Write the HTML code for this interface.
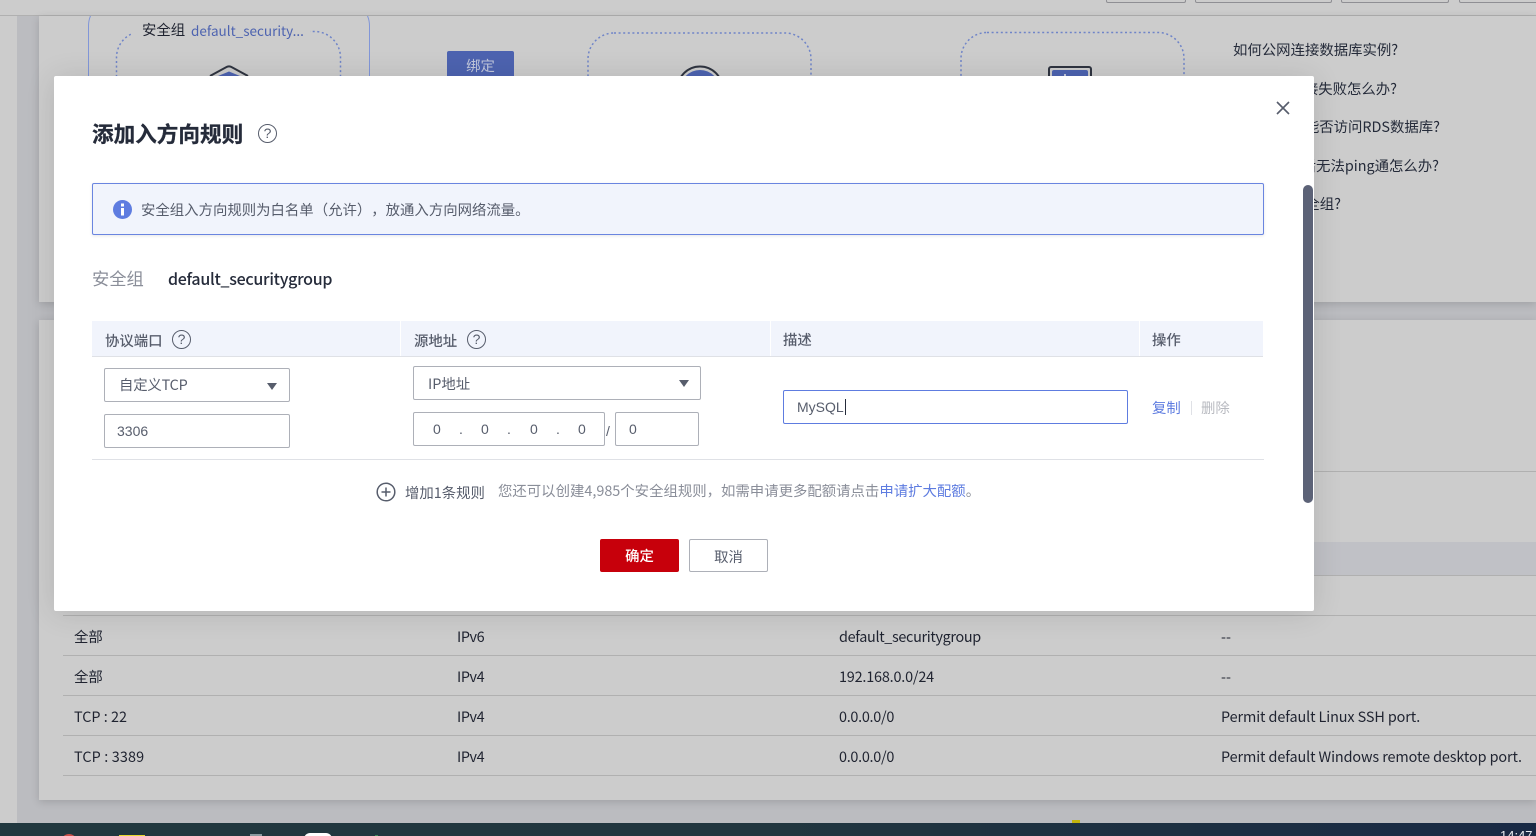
<!DOCTYPE html>
<html lang="zh">
<head>
<meta charset="utf-8">
<style>
html,body{margin:0;padding:0;width:1536px;height:836px;overflow:hidden;background:#ccc}
body{position:relative;font-family:"Liberation Sans","Noto Sans CJK SC",sans-serif;font-size:14.4px;color:#252b3a}
.a{position:absolute;white-space:nowrap}
.n{font-family:"Noto Sans CJK SC",sans-serif;text-spacing-trim:space-all}
.l{position:absolute;height:1px;background:#b0b0b0}
.box{position:absolute;box-sizing:border-box;background:#fff;border:1px solid #adb0b8;border-radius:2px}
.q{position:absolute;box-sizing:border-box;border:1.6px solid #575d6c;border-radius:50%;width:19px;height:19px;text-align:center;font-size:14px;line-height:16px;color:#575d6c}
.tri{position:absolute;width:0;height:0;border-left:5px solid transparent;border-right:5px solid transparent;border-top:7px solid #575d6c}
.th{position:absolute;top:321px;height:35px;background:#f1f4fc}
.h{top:331px;line-height:20px;font-weight:500;color:#575d6c}
.c{line-height:20px;color:#1f2330}
.r{line-height:20px;color:#252b3a}
</style>
</head>
<body>
<!-- background -->
<div class="a" style="left:17px;top:15px;width:1519px;height:808px;background:#bbbcc0"></div>
<div class="a" style="left:0;top:0;width:1536px;height:15px;background:#ccc"></div>
<div class="l" style="left:0;top:15px;width:1536px"></div>
<div class="a" style="left:1106px;top:0;width:78px;height:2px;border:1px solid #8f8f94;border-top:0;border-radius:0 0 2px 2px"></div>
<div class="a" style="left:1195px;top:0;width:135px;height:2px;border:1px solid #8f8f94;border-top:0;border-radius:0 0 2px 2px"></div>
<div class="a" style="left:1341px;top:0;width:106px;height:2px;border:1px solid #8f8f94;border-top:0;border-radius:0 0 2px 2px"></div>
<div class="a" style="left:1459px;top:0;width:77px;height:2px;border:1px solid #8f8f94;border-top:0;border-radius:0 0 2px 2px"></div>

<!-- panels -->
<div class="a" style="left:39px;top:16px;width:1497px;height:286px;background:#ccc;box-shadow:0 2px 8px rgba(0,0,0,.15)"></div>
<div class="a" style="left:39px;top:320px;width:1497px;height:480px;background:#ccc;box-shadow:0 2px 8px rgba(0,0,0,.15)"></div>

<!-- top panel diagram -->
<div class="a" style="box-sizing:border-box;left:88px;top:0;width:282px;height:140px;border:1px solid #8196d8;border-radius:26px;clip-path:inset(16px 0 0 0)"></div>
<svg class="a" style="left:0;top:0" width="1300" height="100">
  <g fill="none" stroke="#6f84c8" stroke-width="1.5" stroke-dasharray="2 2.6">
    <rect x="116.5" y="31.5" width="224" height="70" rx="26"/>
    <rect x="588" y="33" width="223" height="70" rx="26"/>
    <rect x="961" y="32.5" width="223" height="70" rx="26"/>
  </g>
</svg>
<div class="a" style="left:131px;top:20px;height:20px;width:179px;background:#ccc"></div>
<div class="a n" style="left:142px;top:20px;line-height:20px;color:#1f2330">安全组</div>
<div class="a n" style="left:191px;top:20px;line-height:20px;font-size:13.5px;color:#4d63b0">default_security...</div>
<svg class="a" style="left:205px;top:60px" width="50" height="20"><path d="M5 16 L22 6.8 Q24 6 26 6.8 L43 16" fill="none" stroke="#2f3440" stroke-width="2"/><path d="M13 20 L13 16 L24 11.5 L35 16 L35 20Z" fill="#4d63b0"/></svg>
<div class="a n" style="left:447px;top:51px;width:67px;height:30px;background:#4d63b0;border-radius:2px;color:#c2c8dc;text-align:center;line-height:30px">绑定</div>
<svg class="a" style="left:677px;top:65px" width="46" height="15"><circle cx="23" cy="24" r="22.5" fill="#ccc" stroke="#2f3440" stroke-width="2"/><circle cx="23" cy="25" r="20" fill="#4d63b0"/></svg>
<div class="a" style="box-sizing:border-box;left:1048px;top:66px;width:44px;height:20px;border:2px solid #2f3440;border-radius:3px;background:#ccc"><div style="margin:2px;height:20px;background:#4d63b0;border-radius:2px 2px 0 0"></div></div>
<div class="a" style="left:1064px;top:74px;width:2px;height:2px;background:#c2c8dc"></div>

<!-- right links -->
<div class="a n r" style="left:1233px;top:40px">如何公网连接数据库实例?</div>
<div class="a n r" style="right:139px;top:79px">数据库连接失败怎么办?</div>
<div class="a n r" style="right:96px;top:117px">同一VPC内是否能否访问RDS数据库?</div>
<div class="a n r" style="right:97px;top:156px">云数据库实例连接后无法ping通怎么办?</div>
<div class="a n r" style="right:195px;top:194px">如何修改安全组?</div>

<!-- lower table -->
<div class="l" style="left:63px;top:471px;width:1473px"></div>
<div class="a" style="left:63px;top:542px;width:1473px;height:33px;background:#c0c1c6"></div>
<div class="l" style="left:63px;top:575px;width:1473px"></div>
<div class="l" style="left:63px;top:615px;width:1473px"></div>
<div class="l" style="left:63px;top:655px;width:1473px"></div>
<div class="l" style="left:63px;top:695px;width:1473px"></div>
<div class="l" style="left:63px;top:735px;width:1473px"></div>
<div class="l" style="left:63px;top:775px;width:1473px"></div>

<div class="a n c" style="left:74px;top:627px">全部</div>
<div class="a n c" style="left:457px;top:627px;letter-spacing:-.4px">IPv6</div>
<div class="a n c" style="left:839px;top:627px;letter-spacing:-.33px">default_securitygroup</div>
<div class="a n c" style="left:1221px;top:627px">--</div>

<div class="a n c" style="left:74px;top:667px">全部</div>
<div class="a n c" style="left:457px;top:667px;letter-spacing:-.4px">IPv4</div>
<div class="a n c" style="left:839px;top:667px;letter-spacing:-.18px">192.168.0.0/24</div>
<div class="a n c" style="left:1221px;top:667px">--</div>

<div class="a n c" style="left:74px;top:707px">TCP : 22</div>
<div class="a n c" style="left:457px;top:707px;letter-spacing:-.4px">IPv4</div>
<div class="a n c" style="left:839px;top:707px;letter-spacing:-.28px">0.0.0.0/0</div>
<div class="a n c" style="left:1221px;top:707px;letter-spacing:-.1px">Permit default Linux SSH port.</div>

<div class="a n c" style="left:74px;top:747px;letter-spacing:.13px">TCP : 3389</div>
<div class="a n c" style="left:457px;top:747px;letter-spacing:-.4px">IPv4</div>
<div class="a n c" style="left:839px;top:747px;letter-spacing:-.28px">0.0.0.0/0</div>
<div class="a n c" style="left:1221px;top:747px;letter-spacing:-.1px">Permit default Windows remote desktop port.</div>

<!-- taskbar -->
<div class="a" style="left:1072px;top:820px;width:8px;height:3px;background:#c4b40c"></div>
<div class="a" style="left:0;top:823px;width:1536px;height:13px;background:linear-gradient(90deg,#21383f 0%,#21363f 50%,#192a45 100%);overflow:hidden">
  <div class="a" style="left:61px;top:11px;width:16px;height:16px;border-radius:50%;background:#c9504a"></div>
  <div class="a" style="left:119px;top:12px;width:26px;height:12px;background:#e6d92e"></div>
  <div class="a" style="left:250px;top:11px;width:12px;height:3px;background:#8a9aa0"></div>
  <div class="a" style="left:304px;top:10px;width:28px;height:14px;border-radius:6px 6px 0 0;background:#fff"></div>
  <div class="a" style="left:375px;top:12px;width:3px;height:3px;background:#3f8a5a"></div>
  <div class="a" style="left:1500px;top:5px;line-height:16px;font-size:13px;color:#e8ecf0">14:47</div>
</div>

<!-- modal -->
<div class="a" style="left:54px;top:76px;width:1260px;height:535px;background:#fff;border-radius:2px;box-shadow:0 2px 30px rgba(0,0,0,.12)"></div>
<div class="a n" style="left:92px;top:119px;line-height:30px;font-size:21.6px;font-weight:700;-webkit-text-stroke:.3px #252b3a;color:#252b3a">添加入方向规则</div>
<div class="q" style="left:258px;top:124px">?</div>
<svg class="a" style="left:1275px;top:100px" width="16" height="16"><path d="M2 2L14 14M14 2L2 14" stroke="#575d6c" stroke-width="1.6" fill="none"/></svg>

<div class="a" style="box-sizing:border-box;left:92px;top:183px;width:1172px;height:52px;background:#f1f4fc;border:1px solid #6a85e0;border-radius:2px;box-shadow:0 1px 3px rgba(0,0,0,.1)"></div>
<svg class="a" style="left:113px;top:200px" width="19" height="19"><circle cx="9.5" cy="9.5" r="9.5" fill="#5e7ce0"/><rect x="8" y="3.5" width="3" height="3" fill="#fff"/><rect x="8" y="8" width="3" height="7.5" fill="#fff"/></svg>
<div class="a n" style="left:141px;top:200px;line-height:20px;color:#575d6c">安全组入方向规则为白名单（允许），放通入方向网络流量。</div>

<div class="a n" style="left:92px;top:266px;line-height:24px;font-size:17.28px;color:#8a8e99">安全组</div>
<div class="a n" style="left:168px;top:266px;line-height:24px;font-size:16px;font-weight:500;letter-spacing:-.28px;color:#252b3a">default_securitygroup</div>

<!-- form table -->
<div class="th" style="left:92px;width:308px"></div>
<div class="th" style="left:401px;width:369px"></div>
<div class="th" style="left:771px;width:368px"></div>
<div class="th" style="left:1140px;width:123px"></div>
<div class="a" style="left:92px;top:356px;width:1171px;height:1px;background:#dfe1e6"></div>
<div class="a n h" style="left:105px">协议端口</div>
<div class="q" style="left:172px;top:330px">?</div>
<div class="a n h" style="left:414px">源地址</div>
<div class="q" style="left:467px;top:330px">?</div>
<div class="a n h" style="left:783px;top:330px">描述</div>
<div class="a n h" style="left:1152px;top:330px">操作</div>

<div class="box" style="left:104px;top:368px;width:186px;height:34px"></div>
<div class="a n" style="left:119px;top:375px;line-height:20px;letter-spacing:-.2px;color:#575d6c">自定义TCP</div>
<div class="tri" style="left:267px;top:383px"></div>
<div class="box" style="left:104px;top:414px;width:186px;height:34px"></div>
<div class="a" style="left:117px;top:421px;line-height:20px;font-size:14px;color:#575d6c">3306</div>

<div class="box" style="left:413px;top:366px;width:288px;height:34px"></div>
<div class="a n" style="left:428px;top:374px;line-height:20px;color:#575d6c">IP地址</div>
<div class="tri" style="left:679px;top:380px"></div>
<div class="box" style="left:413px;top:412px;width:192px;height:34px"></div>
<div class="a" style="left:433px;top:419px;line-height:20px;font-size:14px;color:#575d6c">0</div>
<div class="a" style="left:459px;top:419px;line-height:20px;font-size:14px;color:#575d6c">.</div>
<div class="a" style="left:481px;top:419px;line-height:20px;font-size:14px;color:#575d6c">0</div>
<div class="a" style="left:507px;top:419px;line-height:20px;font-size:14px;color:#575d6c">.</div>
<div class="a" style="left:530px;top:419px;line-height:20px;font-size:14px;color:#575d6c">0</div>
<div class="a" style="left:556px;top:419px;line-height:20px;font-size:14px;color:#575d6c">.</div>
<div class="a" style="left:578px;top:419px;line-height:20px;font-size:14px;color:#575d6c">0</div>
<div class="a" style="left:606px;top:421px;line-height:20px;font-size:14px;color:#575d6c">/</div>
<div class="box" style="left:615px;top:412px;width:84px;height:34px"></div>
<div class="a" style="left:629px;top:419px;line-height:20px;font-size:14px;color:#575d6c">0</div>

<div class="box" style="left:783px;top:390px;width:345px;height:34px;border-color:#5e7ce0"></div>
<div class="a" style="left:797px;top:397px;line-height:20px;font-size:14px;color:#575d6c">MySQL</div>
<div class="a" style="left:845px;top:399px;width:1px;height:16px;background:#252b3a"></div>
<div class="a n" style="left:1152px;top:398px;line-height:20px;color:#5e7ce0">复制</div>
<div class="a" style="left:1191px;top:401px;width:1px;height:14px;background:#dfe1e6"></div>
<div class="a n" style="left:1201px;top:398px;line-height:20px;color:#b8bac0">删除</div>
<div class="a" style="left:92px;top:459px;width:1172px;height:1px;background:#dfe1e6"></div>

<svg class="a" style="left:376px;top:482px" width="20" height="20"><circle cx="10" cy="10" r="8.8" fill="none" stroke="#575d6c" stroke-width="1.5"/><path d="M5.5 10H14.5M10 5.5V14.5" stroke="#575d6c" stroke-width="1.5"/></svg>
<div class="a n" style="left:405px;top:483px;line-height:20px;color:#575d6c">增加1条规则</div>
<div class="a n" style="left:498px;top:481px;line-height:20px;color:#8a8e99">您还可以创建4,985个安全组规则，如需申请更多配额请点击<span style="color:#5e7ce0">申请扩大配额</span>。</div>

<div class="a n" style="left:600px;top:539px;width:79px;height:33px;background:#c7000b;border-radius:2px;color:#fff;text-align:center;line-height:33px;font-weight:500">确定</div>
<div class="a n" style="box-sizing:border-box;left:689px;top:539px;width:79px;height:33px;background:#fff;border:1px solid #adb0b8;border-radius:2px;color:#575d6c;text-align:center;line-height:33px">取消</div>

<!-- modal scrollbar -->
<div class="a" style="left:1303px;top:185px;width:10px;height:318px;background:#5c6277;border-radius:5px"></div>
</body>
</html>
